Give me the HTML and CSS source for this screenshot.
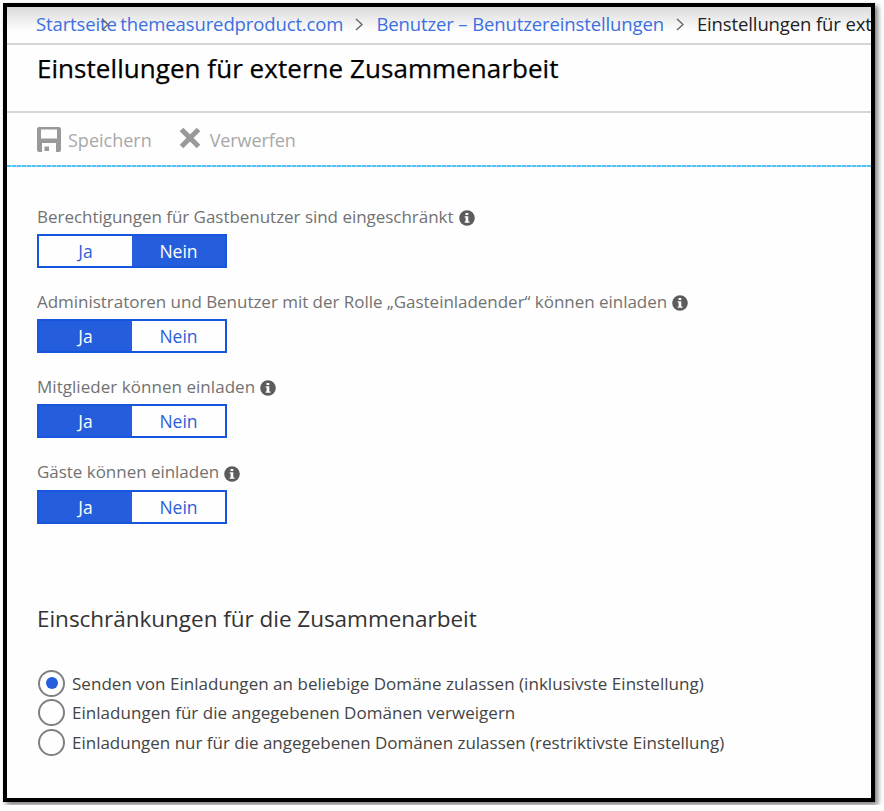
FILE: index.html
```html
<!DOCTYPE html>
<html lang="de">
<head>
<meta charset="utf-8">
<title>Einstellungen für externe Zusammenarbeit</title>
<link rel="stylesheet" href="styles.css">
</head>
<body>
<svg class="sprite" aria-hidden="true">
  <symbol id="chevron" viewBox="0 0 8 13"><path d="M1 1l6 5.500-6 5.500"/></symbol>
  <symbol id="info" viewBox="0 0 16 16"><circle cx="8" cy="8" r="7.800"/><path d="M6.500 3h2.800v2H6.500zM5.700 6.300h3.600v5.200h1.200v1.300H5.700v-1.300h.9V7.600h-.9z"/></symbol>
</svg>
<main class="panel">
  <nav class="breadcrumb">
    <a class="crumb crumb-home">Startseite<svg class="chevron chevron-over"><use href="#chevron"/></svg></a>
    <a class="crumb">themeasuredproduct.com</a>
    <svg class="chevron"><use href="#chevron"/></svg>
    <a class="crumb">Benutzer – Benutzereinstellungen</a>
    <svg class="chevron"><use href="#chevron"/></svg>
    <span class="crumb crumb-current">Einstellungen für ext</span>
  </nav>
  <header class="title-bar"><h1>Einstellungen für externe Zusammenarbeit</h1></header>
  <div class="toolbar">
    <button class="tool tool-save"><svg class="icon-save" viewBox="0 0 24 25"><path fill-rule="evenodd" d="M2 0h20q2 0 2 2v21q0 2-2 2h-3v-9H5v9H2q-2 0-2-2V2q0-2 2-2zM4 2.500v9h16v-9zM7.500 19.500h4.500v4.500H7.500z"/></svg>Speichern</button>
    <button class="tool tool-discard"><svg class="icon-x" viewBox="0 0 22 22"><path d="M2.500 2.500l17 17M19.500 2.500l-17 17"/></svg>Verwerfen</button>
  </div>
  <section class="settings">
    <div class="setting">
      <div class="label">Berechtigungen für Gastbenutzer sind eingeschränkt<svg class="info"><use href="#info"/></svg></div>
      <div class="toggle"><span class="option">Ja</span><span class="option on">Nein</span></div>
    </div>
    <div class="setting">
      <div class="label">Administratoren und Benutzer mit der Rolle „Gasteinladender“ können einladen<svg class="info"><use href="#info"/></svg></div>
      <div class="toggle"><span class="option on">Ja</span><span class="option">Nein</span></div>
    </div>
    <div class="setting">
      <div class="label label-members">Mitglieder können einladen<svg class="info"><use href="#info"/></svg></div>
      <div class="toggle"><span class="option on">Ja</span><span class="option">Nein</span></div>
    </div>
    <div class="setting">
      <div class="label">Gäste können einladen<svg class="info"><use href="#info"/></svg></div>
      <div class="toggle"><span class="option on">Ja</span><span class="option">Nein</span></div>
    </div>
  </section>
  <section class="restrictions">
    <h2>Einschränkungen für die Zusammenarbeit</h2>
    <div class="radio"><span class="dot checked"></span>Senden von Einladungen an beliebige Domäne zulassen (inklusivste Einstellung)</div>
    <div class="radio"><span class="dot"></span>Einladungen für die angegebenen Domänen verweigern</div>
    <div class="radio radio-tight"><span class="dot"></span>Einladungen nur für die angegebenen Domänen zulassen (restriktivste Einstellung)</div>
  </section>
</main>
</body>
</html>
```
FILE: styles.css
```css
* { box-sizing: border-box; }

body {
  margin: 0;
  background: #fff;
  font-family: "Open Sans", "Noto Sans", sans-serif;
  font-size: 17px;
  white-space: nowrap;
  overflow: hidden;
}

.sprite { display: none; }

.panel {
  width: 872px;
  height: 799px;
  margin: 3px;
  border: 4px solid #000;
  background: #fefefe;
  overflow: hidden;
  box-shadow: 3px 3px 5px rgba(0, 0, 0, .5);
}

.breadcrumb {
  display: flex;
  align-items: center;
  height: 38px;
  padding: 0 0 4px 29px;
  border-bottom: 2px solid #d5d5d5;
  background: linear-gradient(#dadada, #fefefe 24px);
}

.crumb {
  position: relative;
  flex: none;
  color: #3c6fe0;
  font-size: 18.5px;
  letter-spacing: -.12px;
}

.crumb-home { margin-right: 3.500px; }
.crumb-current { color: #222; }

.chevron {
  flex: none;
  width: 8px;
  height: 13px;
  margin: 2px 13px 0 12px;
  fill: none;
  stroke: #666;
  stroke-width: 1.4;
}

.chevron-over {
  position: absolute;
  left: 65px;
  top: 7px;
  margin: 0;
}

.title-bar {
  height: 68px;
  padding: 5px 0 0 30px;
  border-bottom: 2px solid #d5d5d5;
}

h1 {
  margin: 0;
  color: #000;
  font-size: 26px;
  line-height: 36px;
  font-weight: 500;
  letter-spacing: .05px;
  -webkit-text-stroke: .25px #000;
}

.toolbar {
  display: flex;
  align-items: center;
  height: 54px;
  padding: 0 0 2px 30px;
  background: repeating-linear-gradient(90deg, #4cc3f3 0 4px, #b9d9e6 4px 5px) bottom / 100% 2px no-repeat;
}

.tool {
  display: flex;
  align-items: center;
  padding: 2px 0 0;
  border: 0;
  background: none;
  color: #a8a8a8;
  font: 18px "Open Sans", "Noto Sans", sans-serif;
}

.tool-save { gap: 7px; margin-right: 27px; }
.tool-discard { gap: 9px; letter-spacing: -.1px; }

.icon-save { width: 24px; height: 25px; margin-top: -2px; fill: #999; }
.icon-x { width: 22px; height: 22px; margin-top: -4px; stroke: #999; stroke-width: 5; }

.settings { padding: 36px 0 0 30px; }

.setting { height: 85.2px; }

.label {
  display: flex;
  align-items: center;
  height: 26px;
  color: #727272;
  letter-spacing: -.03px;
}

.label-members { letter-spacing: .04px; }

.info { width: 16px; height: 16px; margin: 4px 0 0 5px; fill: #5c5c5c; }
#info path { fill: #fff; }

.toggle {
  display: flex;
  width: 190px;
  height: 34px;
  margin-top: 5px;
  border: 2px solid #1756dc;
}

.option {
  flex: 1;
  color: #2a5fd8;
  font-size: 17.5px;
  line-height: 30px;
  text-align: center;
}

.option.on { background: #245edc; color: #fff; }

.restrictions { padding: 57px 0 0 30px; }

h2 {
  margin: 0 0 32px;
  color: #333;
  font-size: 22.5px;
  line-height: 36px;
  font-weight: 400;
  letter-spacing: -.03px;
}

.radio {
  display: flex;
  align-items: center;
  height: 29.4px;
  color: #444;
  letter-spacing: .03px;
}

.radio-tight { letter-spacing: -.01px; }

.dot {
  display: grid;
  place-items: center;
  width: 27px;
  height: 27px;
  margin: 0 7px 0 1px;
  border: 2px solid #808080;
  border-radius: 50%;
}

.dot.checked::after {
  content: "";
  width: 12px;
  height: 12px;
  border-radius: 50%;
  background: #245edc;
}
```
